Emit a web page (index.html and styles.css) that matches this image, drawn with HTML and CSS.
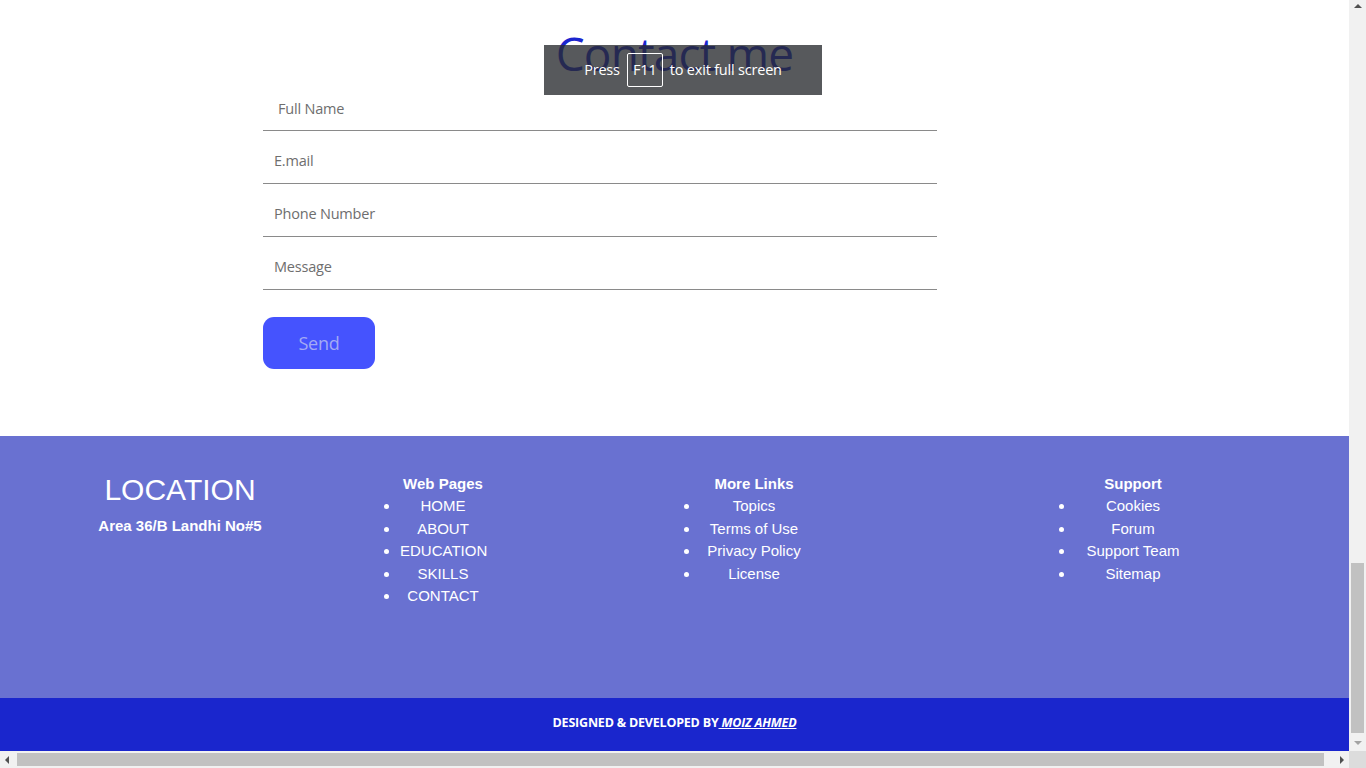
FILE: index.html
```html
<!DOCTYPE html>
<html lang="en">
<head>
<meta charset="utf-8">
<title>Contact</title>
<link rel="stylesheet" href="styles.css">
</head>
<body>
<div class="screen">
  <div class="viewport">
    <section class="contact">
      <h1 class="contact-title">Contact me</h1>
      <form class="contact-form">
        <input class="field field-first" type="text" placeholder="Full Name">
        <input class="field" type="email" placeholder="E.mail">
        <input class="field" type="tel" placeholder="Phone Number">
        <input class="field" type="text" placeholder="Message">
        <button class="send" type="button">Send</button>
      </form>
    </section>

    <footer class="footer">
      <div class="footer-cols">
        <div class="col col-location">
          <h2 class="loc-title">LOCATION</h2>
          <p class="loc-addr">Area 36/B Landhi No#5</p>
        </div>
        <div class="col">
          <h3 class="col-title">Web Pages</h3>
          <ul class="links links-w1">
            <li>HOME</li>
            <li>ABOUT</li>
            <li>EDUCATION</li>
            <li>SKILLS</li>
            <li>CONTACT</li>
          </ul>
        </div>
        <div class="col">
          <h3 class="col-title">More Links</h3>
          <ul class="links links-w2">
            <li>Topics</li>
            <li>Terms of Use</li>
            <li>Privacy Policy</li>
            <li>License</li>
          </ul>
        </div>
        <div class="col">
          <h3 class="col-title">Support</h3>
          <ul class="links links-w3">
            <li>Cookies</li>
            <li>Forum</li>
            <li>Support Team</li>
            <li>Sitemap</li>
          </ul>
        </div>
      </div>
    </footer>
    <div class="credits">
      <p>DESIGNED &amp; DEVELOPED BY<a class="author" href="#">&nbsp;MOIZ AHMED</a></p>
    </div>

    <div class="fs-toast">
      <span>Press</span>
      <span class="key">F11</span>
      <span>to exit full screen</span>
    </div>
  </div>

  <div class="vscroll">
    <span class="arrow arrow-up"></span>
    <div class="vtrack"><div class="vthumb"></div></div>
    <span class="arrow arrow-down"></span>
  </div>
  <div class="hscroll">
    <span class="arrow arrow-left"></span>
    <div class="htrack"><div class="hthumb"></div></div>
    <span class="arrow arrow-right"></span>
  </div>
  <div class="corner"></div>
</div>
</body>
</html>
```

FILE: styles.css
```css
* { box-sizing: border-box; }

html, body {
  margin: 0;
  padding: 0;
  width: 1366px;
  height: 768px;
  overflow: hidden;
  background: #ffffff;
}

.screen {
  display: grid;
  grid-template-columns: 1349px 17px;
  grid-template-rows: 751px 17px;
  width: 1366px;
  height: 768px;
}

.viewport {
  position: relative;
  overflow: hidden;
  background: #ffffff;
  display: flex;
  flex-direction: column;
}

/* ---------- contact ---------- */
.contact {
  padding-top: 27px;
  height: 436px;
  flex: none;
}

.contact-title {
  margin: 0;
  text-align: center;
  font-family: "Open Sans", "Noto Sans", sans-serif;
  font-weight: 400;
  font-size: 46px;
  line-height: 53px;
  color: #1b25cf;
  letter-spacing: -0.8px;
}

.contact-form {
  margin-left: 263px;
  width: 674px;
  display: flex;
  flex-direction: column;
  align-items: flex-start;
}

.field {
  display: block;
  width: 100%;
  height: 53.3px;
  border: 0;
  border-bottom: 1px solid #8a8a8a;
  outline: none;
  padding: 7px 0 0 11px;
  font-family: "Open Sans", "Noto Sans", sans-serif;
  font-size: 14.5px;
  color: #333;
  background: transparent;
  letter-spacing: -0.2px;
}
.field-first { padding-left: 15px; height: 50.5px; }
.field::placeholder { color: #6e6e6e; }

.send {
  margin-top: 26.5px;
  width: 112px;
  height: 52px;
  border: 0;
  border-radius: 11px;
  background: #4553fe;
  color: #a3aaf4;
  font-family: "Open Sans", "Noto Sans", sans-serif;
  font-size: 18px;
  letter-spacing: -0.2px;
  padding: 0;
}

/* ---------- footer ---------- */
.footer {
  height: 262px;
  flex: none;
  background: #6971d1;
  color: #ffffff;
  font-family: "Liberation Sans", Arial, sans-serif;
  padding-top: 37px;
}

.footer-cols {
  display: grid;
  grid-template-columns: 360px 166px 456px 302px;
}

.col { text-align: center; }

.loc-title {
  margin: 0;
  font-weight: 400;
  font-size: 30px;
  line-height: 34px;
}
.loc-addr {
  margin: 10px 0 0;
  font-weight: 700;
  font-size: 15px;
  line-height: 18px;
}

.col-title {
  margin: 1px 0 1px;
  font-size: 15px;
  font-weight: 700;
  line-height: 20px;
}

.links {
  margin: 0 auto;
  padding: 0;
  list-style: disc outside;
  font-size: 15px;
  line-height: 22.5px;
}
.links li { text-align: center; }
.links-w1 { width: 86px; }
.links-w2 { width: 108px; }
.links-w3 { width: 116px; }

.credits {
  height: 53px;
  flex: none;
  background: #1a26cd;
  display: flex;
  align-items: center;
  justify-content: center;
  padding-bottom: 4px;
}
.credits p {
  margin: 0;
  color: #ffffff;
  font-family: "Open Sans", "Noto Sans", sans-serif;
  font-weight: 700;
  font-size: 12.5px;
  letter-spacing: -0.2px;
}
.author {
  color: #ffffff;
  font-style: italic;
  text-decoration: underline;
}

/* ---------- fullscreen toast ---------- */
.fs-toast {
  position: absolute;
  left: 544px;
  top: 45px;
  width: 278px;
  height: 50px;
  background: rgba(40, 42, 46, 0.78);
  color: #ffffff;
  font-family: "Open Sans", "Noto Sans", sans-serif;
  font-size: 14.5px;
  letter-spacing: -0.2px;
  display: flex;
  align-items: center;
  justify-content: center;
  gap: 7px;
  padding-bottom: 1px;
}
.key {
  display: inline-flex;
  align-items: center;
  justify-content: center;
  width: 36px;
  height: 34px;
  border: 1px solid #ffffff;
  border-radius: 2px;
}

/* ---------- scrollbars ---------- */
.vscroll {
  background: #f1f1f1;
  display: flex;
  flex-direction: column;
  align-items: center;
}
.vtrack {
  flex: 1;
  width: 100%;
  position: relative;
}
.vthumb {
  position: absolute;
  left: 2px;
  right: 2px;
  top: 546px;
  height: 170px;
  background: #c1c1c1;
}
.hscroll {
  background: #f1f1f1;
  display: flex;
  align-items: center;
}
.htrack {
  flex: 1;
  height: 100%;
  position: relative;
}
.hthumb {
  position: absolute;
  top: 2px;
  bottom: 2px;
  left: 0;
  width: 1307px;
  background: #c1c1c1;
}
.corner { background: #dcdcdc; }

.arrow {
  flex: none;
  width: 17px;
  height: 17px;
  position: relative;
}
.arrow::after {
  content: "";
  position: absolute;
  width: 0;
  height: 0;
  border: 4px solid transparent;
}
.arrow-up::after {
  left: 4.5px; top: 4px;
  border-bottom: 4px solid #505050;
  border-top-width: 0;
}
.arrow-down::after {
  left: 4.5px; top: 7px;
  border-top: 4px solid #a3a3a3;
  border-bottom-width: 0;
}
.arrow-left::after {
  left: 5px; top: 4.5px;
  border-right: 4px solid #505050;
  border-left-width: 0;
}
.arrow-right::after {
  left: 8px; top: 4.5px;
  border-left: 4px solid #505050;
  border-right-width: 0;
}
```
